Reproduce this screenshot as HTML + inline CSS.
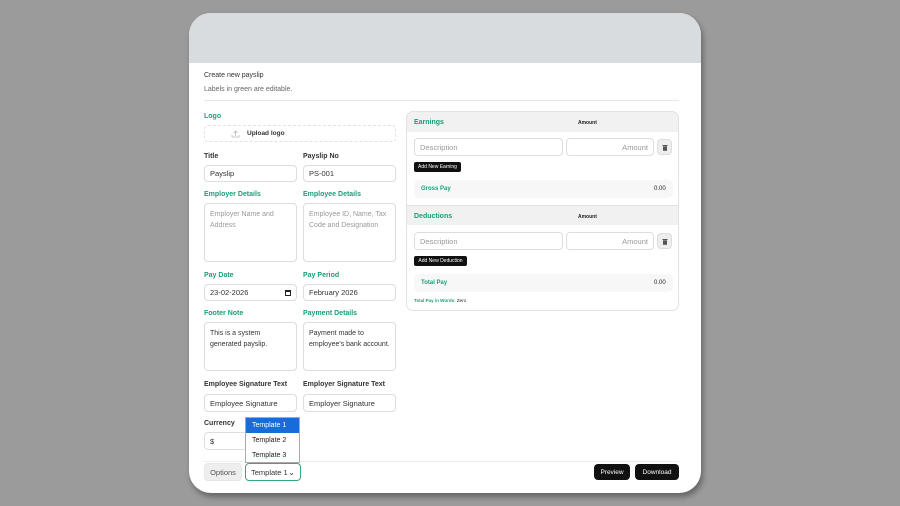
<!DOCTYPE html><html><head><style>
*{box-sizing:border-box;margin:0;padding:0}
body{width:900px;height:506px;background:#9b9b9b;font-family:"Liberation Sans",sans-serif;position:relative;overflow:hidden;color:#222}
.card{position:absolute;left:189px;top:13px;width:512px;height:480px;background:#fff;border-radius:22px;overflow:hidden;box-shadow:2px 4px 6px rgba(0,0,0,.35)}
.hdr{position:absolute;left:0;top:0;width:512px;height:50px;background:#d9dcde}
.a{position:absolute}
.t{font-size:7px;color:#333}
.lbl{font-size:7px;font-weight:bold;color:#333}
.g{color:#1a9e78}
.in{position:absolute;border:1px solid #ddd;border-radius:4px;font-size:7.5px;color:#333;padding:0 5px;display:flex;align-items:center;background:#fff}
.ta{position:absolute;border:1px solid #ddd;border-radius:4px;font-size:7px;color:#333;padding:6px 5px;line-height:10.5px}
.ph{color:#999}
.btn{position:absolute;background:#111;color:#fff;font-size:6.5px;border-radius:4px;display:flex;align-items:center;justify-content:center}
</style></head><body>
<div class="card">
<div class="hdr"></div>
<div class="a t" style="left:15px;top:59px">Create new payslip</div>
<div class="a t" style="left:15px;top:73px;color:#666">Labels in green are editable.</div>
<div class="a" style="left:15px;top:87px;width:475px;height:1px;background:#e6e6e6"></div>
<div class="a lbl g" style="left:15px;top:100px">Logo</div>
<div class="in" style="left:15px;top:112px;width:192px;height:17px;border:1px dashed #e2e2e2;padding-left:26px"><svg width="9" height="8" viewBox="0 0 9 8" style="margin-right:7px"><path d="M1 5v2h7V5M4.5 6V1M2.5 3l2-2 2 2" fill="none" stroke="#bbb" stroke-width=".8"/></svg><b style="font-size:6.5px">Upload logo</b></div>
<div class="a lbl" style="left:15px;top:140px">Title</div>
<div class="a lbl" style="left:114px;top:140px">Payslip No</div>
<div class="in" style="left:15px;top:152px;width:93px;height:17px">Payslip</div>
<div class="in" style="left:114px;top:152px;width:93px;height:17px">PS-001</div>
<div class="a lbl g" style="left:15px;top:178px">Employer Details</div>
<div class="a lbl g" style="left:114px;top:178px">Employee Details</div>
<div class="ta ph" style="left:15px;top:190px;width:93px;height:59px">Employer Name and Address</div>
<div class="ta ph" style="left:114px;top:190px;width:93px;height:59px">Employee ID, Name, Tax Code and Designation</div>
<div class="a lbl g" style="left:15px;top:259px">Pay Date</div>
<div class="a lbl g" style="left:114px;top:259px">Pay Period</div>
<div class="in" style="left:15px;top:271px;width:93px;height:17px;justify-content:space-between">23-02-2026<span style="display:inline-block;width:6px;height:6px;border:1px solid #222;border-top-width:2px"></span></div>
<div class="in" style="left:114px;top:271px;width:93px;height:17px">February 2026</div>
<div class="a lbl g" style="left:15px;top:297px">Footer Note</div>
<div class="a lbl g" style="left:114px;top:297px">Payment Details</div>
<div class="ta" style="left:15px;top:309px;width:93px;height:49px">This is a system generated payslip.</div>
<div class="ta" style="left:114px;top:309px;width:93px;height:49px">Payment made to employee's bank account.</div>
<div class="a lbl" style="left:15px;top:368px">Employee Signature Text</div>
<div class="a lbl" style="left:114px;top:368px">Employer Signature Text</div>
<div class="in" style="left:15px;top:381px;width:93px;height:18px">Employee Signature</div>
<div class="in" style="left:114px;top:381px;width:93px;height:18px">Employer Signature</div>
<div class="a lbl" style="left:15px;top:407px">Currency</div>
<div class="in" style="left:15px;top:419px;width:50px;height:18px">$</div>
<div class="a" style="left:15px;top:448px;width:475px;height:1px;background:#eee"></div>
<div class="in" style="left:15px;top:450px;width:38px;height:18px;background:#eee;border-color:#e6e6e6;justify-content:center;color:#555">Options</div>
<div class="in" style="left:56px;top:450px;width:56px;height:18px;border:1px solid #3aa583;justify-content:space-between">Template 1<span style="font-size:8px">⌄</span></div>
<div class="a" style="left:56px;top:404px;width:55px;height:46px;background:#fff;border:1px solid #aaa;font-size:7px">
<div style="background:#1a6ad8;color:#fff;height:15px;padding:4px 6px">Template 1</div>
<div style="height:15px;padding:4px 6px">Template 2</div>
<div style="height:15px;padding:4px 6px">Template 3</div></div>
<div class="btn" style="left:405px;top:451px;width:36px;height:16px">Preview</div>
<div class="btn" style="left:446px;top:451px;width:44px;height:16px">Download</div>

<div class="a" style="left:217px;top:98px;width:273px;height:200px;border:1px solid #e2e2e2;border-radius:7px;overflow:hidden">
<div class="a" style="left:0;top:0;width:273px;height:20px;background:#f1f1f1"></div>
<div class="a lbl g" style="left:7px;top:7px;font-size:7px">Earnings</div>
<div class="a" style="left:171px;top:8px;font-size:5px;font-weight:bold">Amount</div>
<div class="in ph" style="left:7px;top:26px;width:149px;height:18px">Description</div>
<div class="in ph" style="left:159px;top:26px;width:88px;height:18px;justify-content:flex-end">Amount</div>
<div class="in" style="left:250px;top:27px;width:15px;height:16px;background:#eee;justify-content:center;padding:0"><svg width="6" height="7" viewBox="0 0 6 7"><rect x="0.5" y="1" width="5" height="1" fill="#555"/><rect x="1" y="2.3" width="4" height="4.5" fill="#555"/></svg></div>
<div class="btn" style="left:7px;top:50px;width:47px;height:10px;font-size:5px;border-radius:2px">Add New Earning</div>
<div class="a" style="left:7px;top:68px;width:259px;height:18px;background:#f7f7f7;border-radius:5px"></div>
<div class="a lbl g" style="left:14px;top:74px;font-size:6px">Gross Pay</div>
<div class="a" style="left:247px;top:74px;font-size:6px">0.00</div>
<div class="a" style="left:0;top:93px;width:273px;height:20px;background:#f1f1f1;border-top:1px solid #e2e2e2"></div>
<div class="a lbl g" style="left:7px;top:101px">Deductions</div>
<div class="a" style="left:171px;top:102px;font-size:5px;font-weight:bold">Amount</div>
<div class="in ph" style="left:7px;top:120px;width:149px;height:18px">Description</div>
<div class="in ph" style="left:159px;top:120px;width:88px;height:18px;justify-content:flex-end">Amount</div>
<div class="in" style="left:250px;top:121px;width:15px;height:16px;background:#eee;justify-content:center;padding:0"><svg width="6" height="7" viewBox="0 0 6 7"><rect x="0.5" y="1" width="5" height="1" fill="#555"/><rect x="1" y="2.3" width="4" height="4.5" fill="#555"/></svg></div>
<div class="btn" style="left:7px;top:144px;width:53px;height:10px;font-size:5px;border-radius:2px">Add New Deduction</div>
<div class="a" style="left:7px;top:162px;width:259px;height:18px;background:#f7f7f7;border-radius:5px"></div>
<div class="a lbl g" style="left:14px;top:168px;font-size:6px">Total Pay</div>
<div class="a" style="left:247px;top:168px;font-size:6px">0.00</div>
<div class="a" style="left:7px;top:186px;font-size:4.5px"><span class="g" style="font-weight:bold">Total Pay in Words:</span> Zero</div>
</div>
</div>
</body></html>
